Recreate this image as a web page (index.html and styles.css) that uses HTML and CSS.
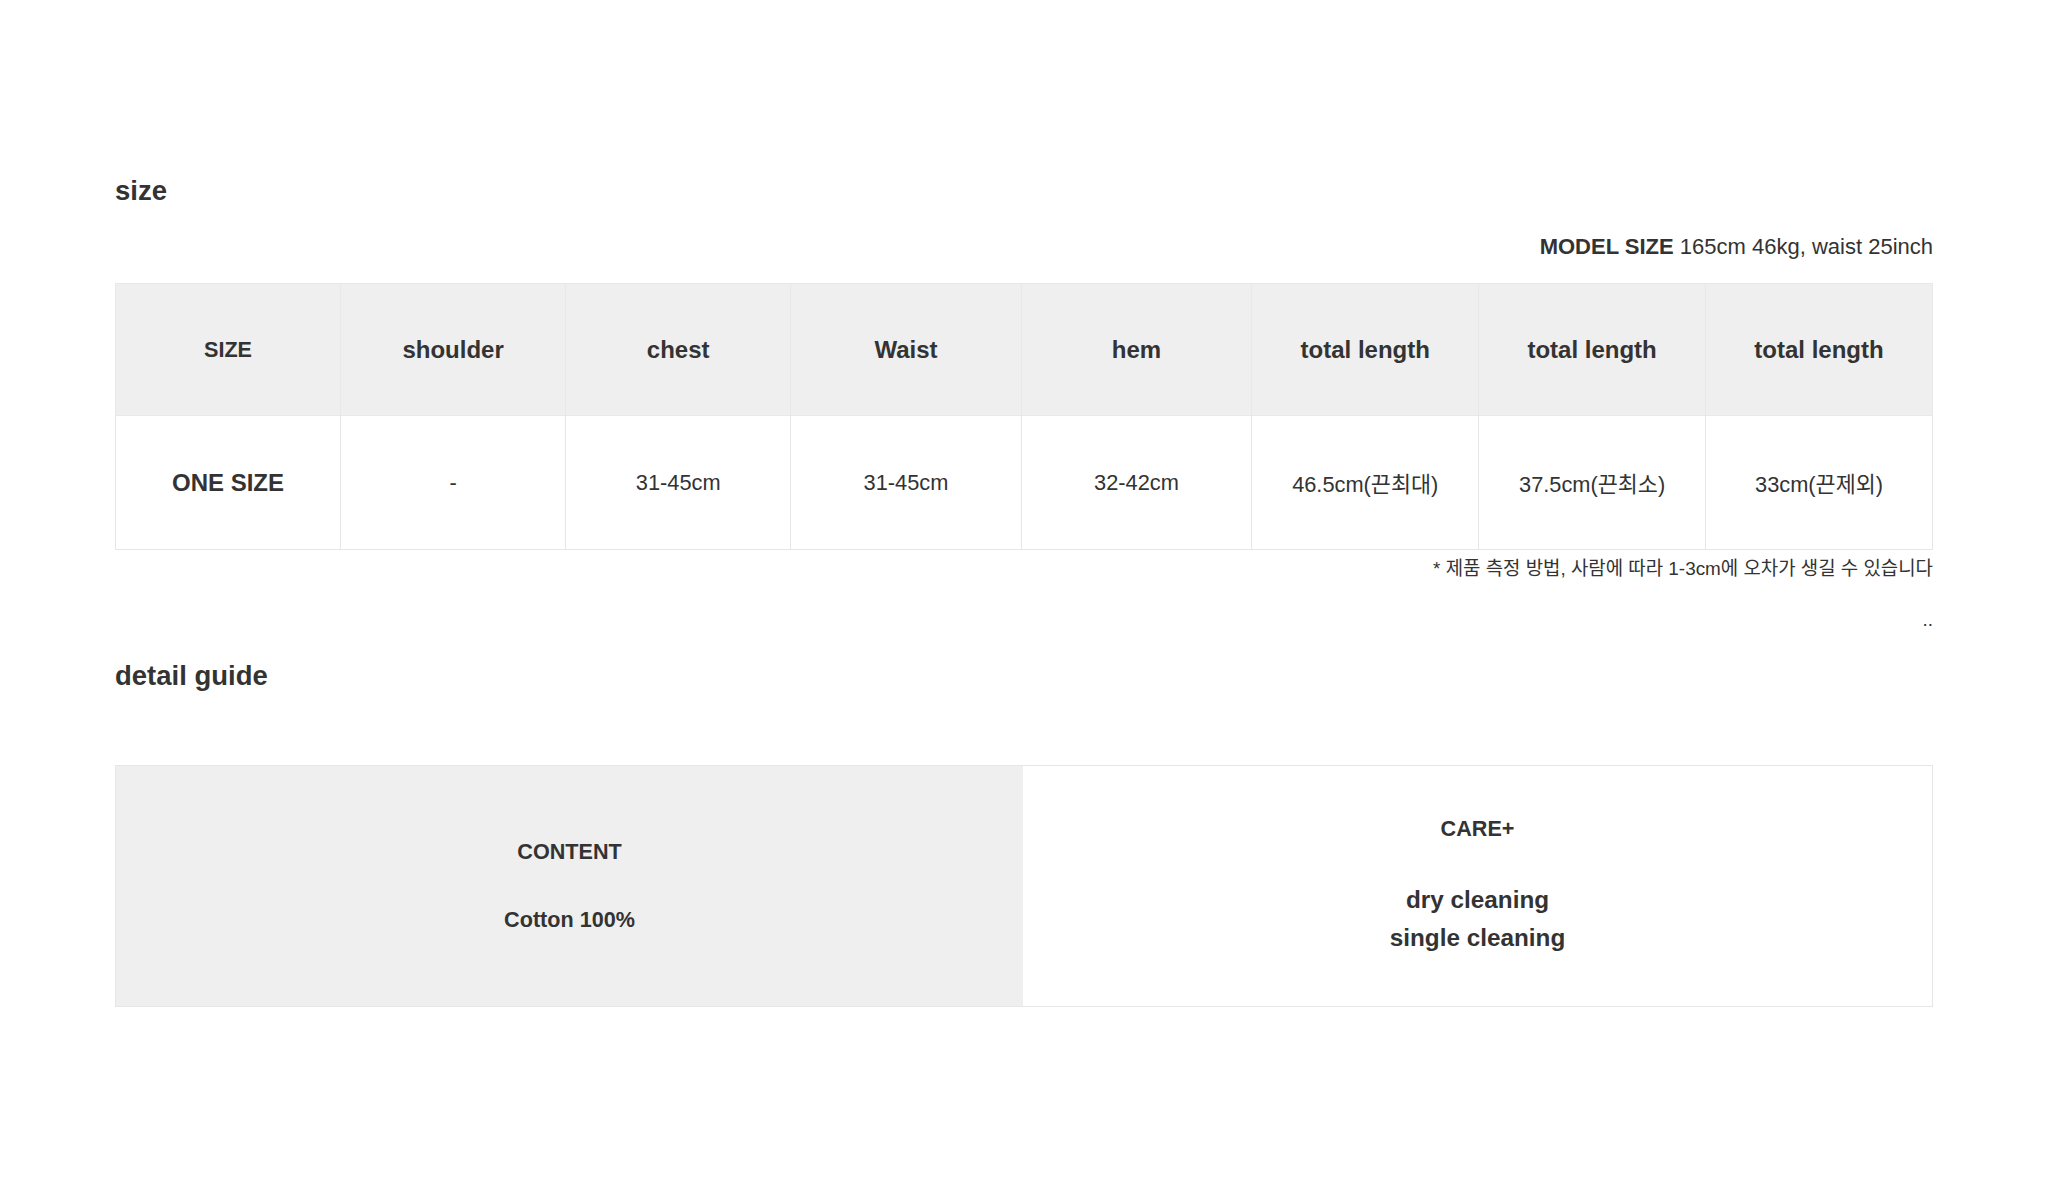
FILE: index.html
```html
<!DOCTYPE html>
<html lang="ko">
<head>
<meta charset="utf-8">
<title>size</title>
<link rel="stylesheet" href="styles.css">
</head>
<body>
<div class="page">
  <h2 class="section-title">size</h2>
  <p class="model"><b>MODEL SIZE</b> 165cm 46kg, waist 25inch</p>
  <table class="size-table">
    <thead>
      <tr class="head-row">
        <th class="c1 small">SIZE</th>
        <th class="c2">shoulder</th>
        <th class="c3">chest</th>
        <th class="c4">Waist</th>
        <th class="c5">hem</th>
        <th class="c6">total length</th>
        <th class="c7">total length</th>
        <th class="c8">total length</th>
      </tr>
    </thead>
    <tbody>
      <tr class="body-row">
        <td class="strong">ONE SIZE</td>
        <td>-</td>
        <td>31-45cm</td>
        <td>31-45cm</td>
        <td>32-42cm</td>
        <td>46.5cm(끈최대)</td>
        <td>37.5cm(끈최소)</td>
        <td>33cm(끈제외)</td>
      </tr>
    </tbody>
  </table>
  <p class="note">* 제품 측정 방법, 사람에 따라 1-3cm에 오차가 생길 수 있습니다</p>
  <p class="dots">..</p>
  <h2 class="section-title detail-title">detail guide</h2>
  <div class="detail">
    <div class="detail-cell content-cell">
      <p class="detail-label">CONTENT</p>
      <p class="detail-value">Cotton 100%</p>
    </div>
    <div class="detail-cell care-cell">
      <p class="detail-label">CARE+</p>
      <p class="care-list">dry cleaning<br>single cleaning</p>
    </div>
  </div>
</div>
</body>
</html>
```

FILE: styles.css
```css
html, body {
  margin: 0;
  padding: 0;
  background: #fff;
}

body {
  font-family: "Liberation Sans", Arial, "Noto Sans CJK KR", sans-serif;
  color: #333;
}

.page {
  width: 1818px;
  margin: 0 auto;
  padding-top: 174.5px;
  padding-bottom: 180px;
}

.section-title {
  margin: 0;
  font-size: 27.5px;
  line-height: 32px;
  font-weight: bold;
}

.model {
  margin: 25px 0 0;
  text-align: right;
  font-size: 22px;
  line-height: 30px;
}

.size-table {
  margin-top: 21.5px;
  width: 100%;
  border-collapse: collapse;
  table-layout: fixed;
}

.size-table th,
.size-table td {
  border: 1px solid #e6e6e6;
  text-align: center;
  vertical-align: middle;
  padding: 0;
}

.size-table th {
  background: #efefef;
  font-size: 24px;
  font-weight: bold;
  border-color: #e8e8e8;
}

.size-table th.small {
  font-size: 21.6px;
}

.size-table td {
  font-size: 21.8px;
}

.size-table td.strong {
  font-size: 24px;
  font-weight: bold;
}

.head-row { height: 132px; }
.body-row { height: 134px; }

.c1, .c2, .c3 { width: 12.35%; }
.c4, .c5 { width: 12.65%; }
.c6, .c7, .c8 { width: 12.45%; }

.note {
  margin: 5.5px 0 0;
  text-align: right;
  font-size: 18.9px;
  line-height: 26px;
}

.dots {
  margin: 25px 0 0;
  text-align: right;
  font-size: 18.9px;
  line-height: 26px;
}

.detail-title {
  margin-top: 27.3px;
}

.detail {
  margin-top: 73.2px;
  display: flex;
  height: 242px;
  box-sizing: border-box;
  border: 1px solid #e6e6e6;
}

.detail-cell {
  display: flex;
  flex-direction: column;
  align-items: center;
  justify-content: center;
  font-weight: bold;
}

.content-cell {
  flex: 0 0 907px;
  background: #efefef;
}

.care-cell {
  flex: 1 1 auto;
  background: #fff;
}

.detail-label {
  margin: 0;
  font-size: 21.6px;
  line-height: 30px;
}

.detail-value {
  margin: 38.5px 0 0;
  font-size: 21.6px;
  line-height: 30px;
}

.care-list {
  margin: 37px 0 0;
  font-size: 24.3px;
  line-height: 38px;
  text-align: center;
}
```
